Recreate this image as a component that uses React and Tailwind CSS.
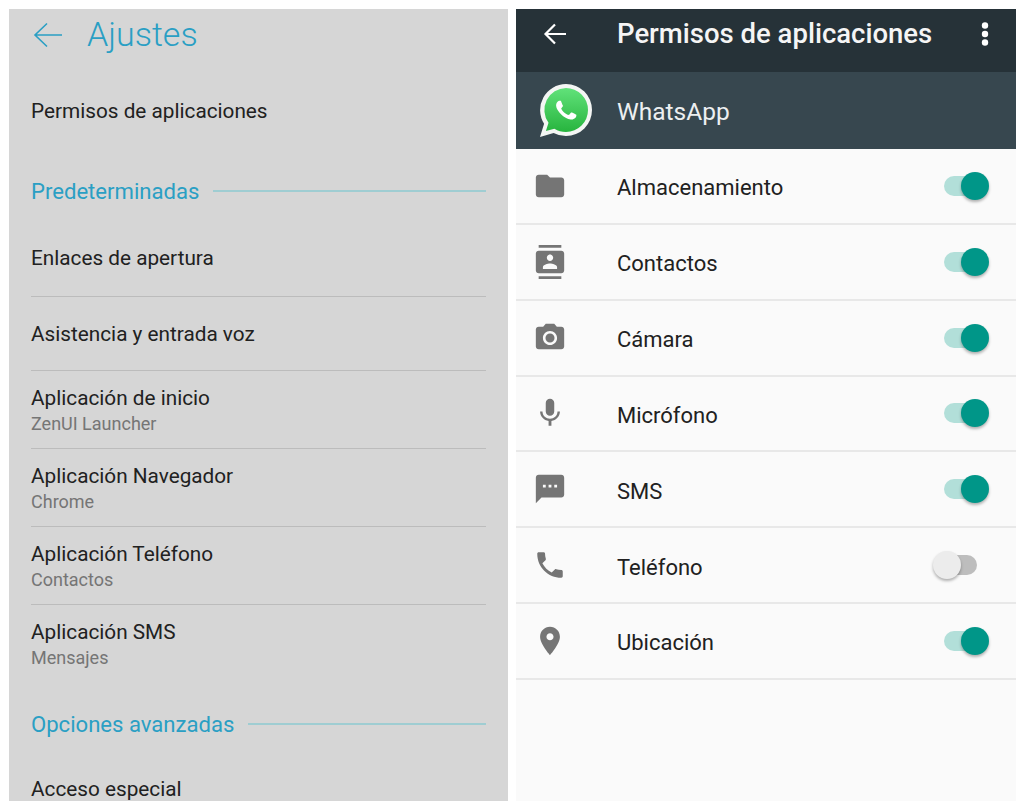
import React from 'react';

const ICONS = {
  folder: 'M10 4H4c-1.1 0-1.99.9-1.99 2L2 18c0 1.1.9 2 2 2h16c1.1 0 2-.9 2-2V8c0-1.1-.9-2-2-2h-8l-2-2z',
  contacts: 'M20 0H4v2h16V0zM4 24h16v-2H4v2zM20 4H4c-1.1 0-2 .9-2 2v12c0 1.1.9 2 2 2h16c1.1 0 2-.9 2-2V6c0-1.1-.9-2-2-2zm-8 2.75c1.24 0 2.25 1.01 2.25 2.25s-1.01 2.25-2.25 2.25S9.75 10.24 9.75 9 10.76 6.75 12 6.75zM17 17H7v-1.5c0-1.67 3.33-2.5 5-2.5s5 .83 5 2.5V17z',
  camera: 'M9 2L7.17 4H4c-1.1 0-2 .9-2 2v12c0 1.1.9 2 2 2h16c1.1 0 2-.9 2-2V6c0-1.1-.9-2-2-2h-3.17L15 2H9zm3 15c-2.76 0-5-2.24-5-5s2.24-5 5-5 5 2.24 5 5-2.24 5-5 5zm0-8.2a3.2 3.2 0 1 0 0 6.4 3.2 3.2 0 0 0 0-6.4z',
  mic: 'M12 14c1.66 0 2.99-1.34 2.99-3L15 5c0-1.66-1.34-3-3-3S9 3.34 9 5v6c0 1.66 1.34 3 3 3zm5.3-3c0 3-2.54 5.1-5.3 5.1S6.7 14 6.7 11H5c0 3.41 2.72 6.23 6 6.72V21h2v-3.28c3.28-.48 6-3.3 6-6.72h-1.7z',
  sms: 'M20 2H4c-1.1 0-1.99.9-1.99 2L2 22l4-4h14c1.1 0 2-.9 2-2V4c0-1.1-.9-2-2-2zM9 11H7V9h2v2zm4 0h-2V9h2v2zm4 0h-2V9h2v2z',
  phone: 'M6.62 10.79c1.44 2.83 3.76 5.14 6.59 6.59l2.2-2.2c.27-.27.67-.36 1.02-.24 1.12.37 2.33.57 3.57.57.55 0 1 .45 1 1V20c0 .55-.45 1-1 1-9.39 0-17-7.61-17-17 0-.55.45-1 1-1h3.5c.55 0 1 .45 1 1 0 1.25.2 2.45.57 3.57.11.35.03.74-.25 1.02l-2.2 2.2z',
  place: 'M12 2C8.13 2 5 5.13 5 9c0 5.25 7 13 7 13s7-7.75 7-13c0-3.87-3.13-7-7-7zm0 9.5c-1.38 0-2.5-1.12-2.5-2.5s1.12-2.5 2.5-2.5 2.5 1.12 2.5 2.5-1.12 2.5-2.5 2.5z',
};

const PERMISSIONS = [
  { icon: 'folder', label: 'Almacenamiento', on: true },
  { icon: 'contacts', label: 'Contactos', on: true },
  { icon: 'camera', label: 'Cámara', on: true },
  { icon: 'mic', label: 'Micrófono', on: true },
  { icon: 'sms', label: 'SMS', on: true },
  { icon: 'phone', label: 'Teléfono', on: false },
  { icon: 'place', label: 'Ubicación', on: true },
];

const DEFAULT_APPS = [
  { title: 'Aplicación de inicio', sub: 'ZenUI Launcher' },
  { title: 'Aplicación Navegador', sub: 'Chrome' },
  { title: 'Aplicación Teléfono', sub: 'Contactos' },
  { title: 'Aplicación SMS', sub: 'Mensajes', last: true },
];

const SectionTitle = ({ children, height }) => (
  <div className={`flex items-center gap-[14px] ${height}`}>
    <span className="text-[22.1px] pt-[2px] text-[#2a9fc4]">{children}</span>
    <span className="flex-1 h-[2px] bg-[#9fcdd2]"></span>
  </div>
);

const Toggle = ({ on }) => (
  <div className="relative w-[56px] h-[28px]">
    {on ? (
      <>
        <div className="absolute left-[11px] right-[10px] top-[4px] h-[20px] rounded-full bg-[#b2dfd9]"></div>
        <div className="absolute left-[28px] top-0 w-[28px] h-[28px] rounded-full bg-[#009688] shadow-[0_2px_3px_rgba(0,0,0,0.3)]"></div>
      </>
    ) : (
      <>
        <div className="absolute left-[11px] right-[12px] top-[4px] h-[20px] rounded-full bg-[#bdbdbd]"></div>
        <div className="absolute left-0 top-0 w-[28px] h-[28px] rounded-full bg-[#ececec] shadow-[0_2px_3px_rgba(0,0,0,0.3)]"></div>
      </>
    )}
  </div>
);

const WhatsAppLogo = () => (
  <svg viewBox="0 0 52 53" className="w-[52px] h-[53px] shrink-0">
    <defs>
      <linearGradient id="wa" x1="0" y1="0" x2="0" y2="1">
        <stop offset="0" stopColor="#61e27a" />
        <stop offset="1" stopColor="#27b43e" />
      </linearGradient>
    </defs>
    <path d="M26 0a26 26 0 0 1 0 52 26 26 0 0 1-12.4-3.1L0 53l4.1-13.2A26 26 0 0 1 26 0z" fill="#f4f6f4" />
    <path d="M26 4a22 22 0 0 1 0 44 22 22 0 0 1-11.6-3.3L5.9 47l2.6-8.2A22 22 0 0 1 26 4z" fill="url(#wa)" />
    <g transform="translate(6 6) scale(1.68)">
      <path fill="#fff" d="M17.472 14.382c-.297-.149-1.758-.867-2.03-.967-.273-.099-.471-.148-.67.15-.197.297-.767.966-.94 1.164-.173.199-.347.223-.644.075-.297-.15-1.255-.463-2.39-1.475-.883-.788-1.48-1.761-1.653-2.059-.173-.297-.018-.458.13-.606.134-.133.298-.347.446-.52.149-.174.198-.298.298-.497.099-.198.05-.371-.025-.52-.075-.149-.669-1.612-.916-2.207-.242-.579-.487-.5-.669-.51-.173-.008-.371-.01-.57-.01-.198 0-.52.074-.792.372-.272.297-1.04 1.016-1.04 2.479 0 1.462 1.065 2.875 1.213 3.074.149.198 2.096 3.2 5.077 4.487.709.306 1.262.489 1.694.625.712.227 1.36.195 1.871.118.571-.085 1.758-.719 2.006-1.413.248-.694.248-1.289.173-1.413-.074-.124-.272-.198-.57-.347" />
    </g>
  </svg>
);

const App = () => {
  return (
    <div className="w-[1024px] h-[809px] bg-white flex gap-2 pl-[9px] pt-[9px] font-['Roboto',sans-serif] overflow-hidden">
      {/* Ajustes */}
      <div className="w-[499px] h-[792px] bg-[#d6d6d6] px-[22px] overflow-hidden text-[#212121]">
        <div className="h-[51px] flex items-center pl-[2px] gap-[24px] text-[#2a9fc4]">
          <svg viewBox="0 0 30 26" className="w-[30px] h-[26px]" fill="none" stroke="currentColor" strokeWidth="1.6">
            <path d="M29 13H2M14 1.5L2 13l12 11.5" />
          </svg>
          <span className="text-[34px] font-light">Ajustes</span>
        </div>
        <div className="h-[102px] pt-[2px] flex items-center text-[20.75px]">Permisos de aplicaciones</div>
        <SectionTitle height="h-[58px]">Predeterminadas</SectionTitle>
        <div className="h-[77px] pt-[2px] flex items-center text-[20.75px] border-b border-[#bcbcbc]">Enlaces de apertura</div>
        <div className="h-[74px] pt-[2px] flex items-center text-[20.75px] border-b border-[#bcbcbc]">Asistencia y entrada voz</div>
        {DEFAULT_APPS.map((app) => (
          <div key={app.title} className={`h-[78px] flex flex-col justify-center gap-[1px] ${app.last ? '' : 'pt-[2px] border-b border-[#bcbcbc]'}`}>
            <div className="text-[20.75px] leading-[26px]">{app.title}</div>
            <div className="text-[18px] leading-[24px] text-[#757575]">{app.sub}</div>
          </div>
        ))}
        <SectionTitle height="h-[82px]">Opciones avanzadas</SectionTitle>
        <div className="h-[48px] pt-[2px] flex items-center text-[20.75px]">Acceso especial</div>
      </div>

      {/* Permisos */}
      <div className="w-[500px] h-[792px] bg-[#fafafa] overflow-hidden">
        <div className="h-[63px] bg-[#263238] flex items-center pl-[27px] pr-[27px] pb-[14px] text-white">
          <svg viewBox="0 0 24 22" className="w-[24px] h-[22px]" fill="none" stroke="currentColor" strokeWidth="2.2">
            <path d="M23 11H3M12 1.5L2.5 11l9.5 9.5" />
          </svg>
          <span className="ml-[50px] flex-1 text-[27.5px] font-medium text-[#f5f5f5]">Permisos de aplicaciones</span>
          <svg viewBox="0 0 8 24" className="w-[8px] h-[24px]" fill="currentColor">
            <circle cx="4" cy="3.5" r="3.2" />
            <circle cx="4" cy="12" r="3.2" />
            <circle cx="4" cy="20.5" r="3.2" />
          </svg>
        </div>
        <div className="h-[77px] bg-[#37474f] flex items-center pl-[24px]">
          <WhatsAppLogo />
          <span className="ml-[25px] pt-[3px] text-[24.5px] text-[#eceff1]">WhatsApp</span>
        </div>
        {PERMISSIONS.map((perm) => (
          <div key={perm.label} className="h-[75.85px] flex items-center pl-[17px] pr-[27px] border-b-2 border-[#e8e8e8]">
            <svg viewBox="0 0 24 24" className="w-[34px] h-[34px] shrink-0" fill="#757575">
              <path fillRule="evenodd" d={ICONS[perm.icon]} />
            </svg>
            <span className="ml-[50px] pt-[4px] flex-1 text-[22px] text-[#212121]">{perm.label}</span>
            <Toggle on={perm.on} />
          </div>
        ))}
      </div>
    </div>
  );
};

export default App;
